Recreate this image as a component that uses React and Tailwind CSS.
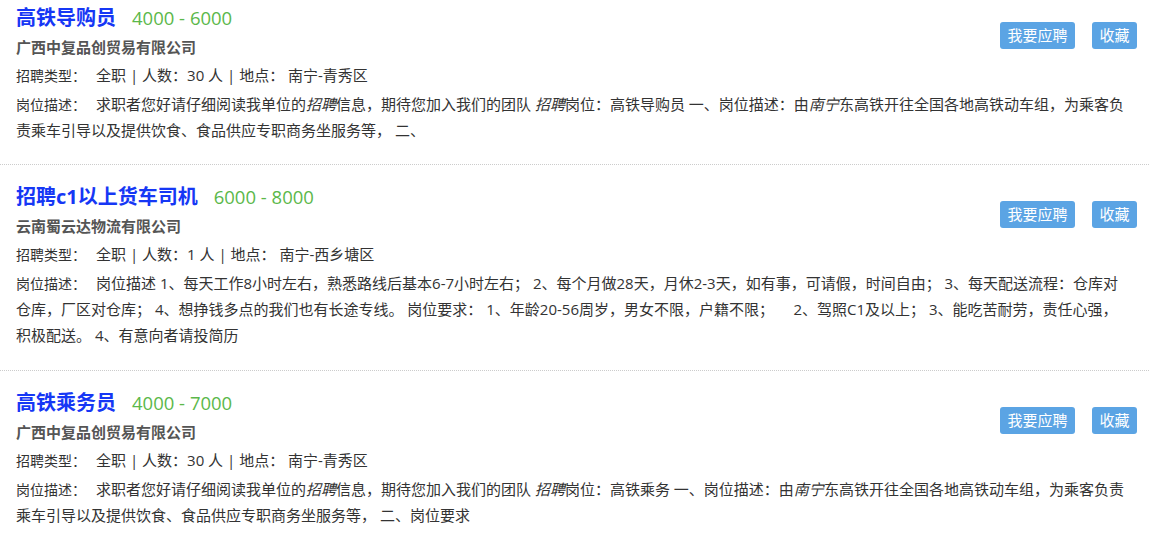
const jobs = [
  {
    title: "高铁导购员",
    salary: "4000 - 6000",
    company: "广西中复品创贸易有限公司",
    type: "全职",
    count: "30",
    place: "南宁-青秀区",
    desc: (
      <>
        求职者您好请仔细阅读我单位的<i>招聘</i>信息，期待您加入我们的团队 <i>招聘</i>
        岗位：高铁导购员 一、岗位描述：由<i>南宁</i>
        东高铁开往全国各地高铁动车组，为乘客负责乘车引导以及提供饮食、食品供应专职商务坐服务等，
        {"\u00a0"}二、
      </>
    ),
  },
  {
    title: "招聘c1以上货车司机",
    salary: "6000 - 8000",
    company: "云南蜀云达物流有限公司",
    type: "全职",
    count: "1",
    place: "南宁-西乡塘区",
    desc: (
      <>
        岗位描述 1、每天工作8小时左右，熟悉路线后基本6-7小时左右； 2、每个月做28天，月休2-3天，如有事，可请假，时间自由；
        3、每天配送流程：仓库对仓库，厂区对仓库； 4、想挣钱多点的我们也有长途专线。 岗位要求：
        1、年龄20-56周岁，男女不限，户籍不限；{"\u00a0\u00a0\u00a0\u00a0\u00a0"}2、驾照C1及以上；
        3、能吃苦耐劳，责任心强，积极配送。 4、有意向者请投简历
      </>
    ),
  },
  {
    title: "高铁乘务员",
    salary: "4000 - 7000",
    company: "广西中复品创贸易有限公司",
    type: "全职",
    count: "30",
    place: "南宁-青秀区",
    desc: (
      <>
        求职者您好请仔细阅读我单位的<i>招聘</i>信息，期待您加入我们的团队 <i>招聘</i>
        岗位：高铁乘务 一、岗位描述：由<i>南宁</i>
        东高铁开往全国各地高铁动车组，为乘客负责乘车引导以及提供饮食、食品供应专职商务坐服务等，
        {"\u00a0"}二、岗位要求
      </>
    ),
  },
];

function JobCard({ job, first }) {
  return (
    <div
      className={`border-b border-dotted border-[#cccccc] pl-4 pr-[18px] ${
        first ? "pt-[3px] pb-[21px]" : "pt-[17px] pb-[22px]"
      }`}
    >
      {/* Header */}
      <div className="flex items-start justify-between">
        <div>
          <div className="flex items-baseline h-[30px] leading-[30px]">
            <span className="text-[20px] font-bold text-[#1637f5]">{job.title}</span>
            <span className="ml-[16px] text-[18.5px] text-[#5bb84a]">{job.salary}</span>
          </div>
          <div className="text-[15px] leading-[28px] font-bold text-[#555555]">
            {job.company}
          </div>
        </div>
        <div className="flex items-center gap-[17px] mt-[19px] mr-[-6px]">
          <button className="w-[75px] h-[27px] rounded-[3px] bg-[#5ba4e4] text-white text-[15px]">
            我要应聘
          </button>
          <button className="w-[45px] h-[27px] rounded-[3px] bg-[#5ba4e4] text-white text-[15px]">
            收藏
          </button>
        </div>
      </div>

      {/* Info */}
      <div className="text-[15px] leading-[28px] text-[#333333]">
        <span className="text-[14px] leading-none">招聘类型：</span>
        <span className="ml-[10px]">
          {job.type} | 人数：{job.count} 人 | 地点： {job.place}
        </span>
      </div>

      {/* Description */}
      <p className="mt-[2px] text-[15px] leading-[26px] text-[#333333]">
        <span className="text-[14px] leading-none">岗位描述：</span>
        <span className="ml-[10px]">{job.desc}</span>
      </p>
    </div>
  );
}

export default function App() {
  return (
    <div
      className="w-full h-[540px] overflow-hidden bg-white"
      style={{ fontFamily: '"Open Sans", "Noto Sans CJK SC", sans-serif' }}
    >
      {jobs.map((job, i) => (
        <JobCard key={job.title} job={job} first={i === 0} />
      ))}
    </div>
  );
}
